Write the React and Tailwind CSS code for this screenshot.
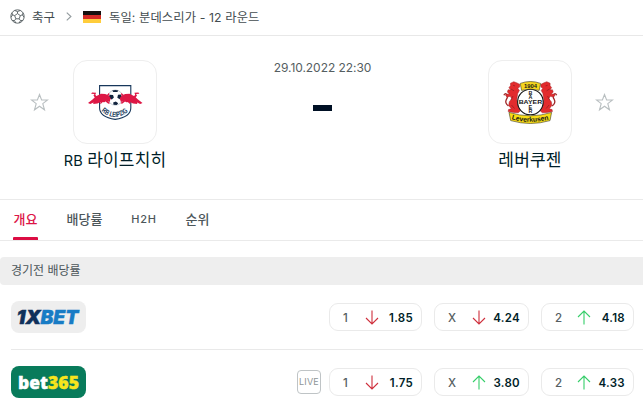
import React, { useState } from 'react';

const bookmakers = [
  {
    id: '1xbet',
    live: false,
    odds: [
      { label: '1', value: '1.85', up: false },
      { label: 'X', value: '4.24', up: false },
      { label: '2', value: '4.18', up: true },
    ],
  },
  {
    id: 'bet365',
    live: true,
    odds: [
      { label: '1', value: '1.75', up: false },
      { label: 'X', value: '3.80', up: true },
      { label: '2', value: '4.33', up: true },
    ],
  },
];

const tabs = [
  { name: '개요', style: 'w-[25px] mr-[28px] text-[13px]' },
  { name: '배당률', style: 'w-[37px] mr-[28px] text-[13px]' },
  { name: 'H2H', style: 'w-[26px] mr-[28px] text-[11px] tracking-[0.7px]' },
  { name: '순위', style: 'w-[25px] text-[13px]' },
];

function BallIcon() {
  return (
    <svg className="w-[15px] h-[15px]" viewBox="0 0 15 15" fill="none" stroke="#555e61" strokeWidth="0.9">
      <circle cx="7.5" cy="7.5" r="6.7" />
      <path d="M7.5 4.6 10.3 6.6 9.2 9.8H5.8L4.7 6.6Z" />
      <path d="M7.5 4.6V2.6M10.3 6.6l2-.7M9.2 9.8l1.3 1.8M5.8 9.8l-1.3 1.8M4.7 6.6l-2-.7" />
      <path d="M4.8 1.5 7.5 2.6 10.2 1.5M13.1 3.9 12.3 5.9 14 8.2M12.8 11.4 10.5 11.6 9.2 14M5.8 14 4.5 11.6 2.2 11.4M1 8.2 2.7 5.9 1.9 3.9" />
    </svg>
  );
}

function StarIcon() {
  return (
    <svg className="w-[19px] h-[19px]" viewBox="0 0 19 19" fill="none" stroke="#b9bfc1" strokeWidth="1.1">
      <path d="M9.5 1.5 11.6 7H17.5L12.8 10.6 14.5 16.8 9.5 13.2 4.5 16.8 6.2 10.6 1.5 7H7.4Z" />
    </svg>
  );
}

function ArrowIcon({ up }) {
  return (
    <svg
      className={up ? 'w-[14px] h-[15px]' : 'w-[14px] h-[15px] rotate-180'}
      viewBox="0 0 14 15"
      fill="none"
      stroke={up ? '#36ce6a' : '#cf2f3c'}
      strokeWidth="1.1"
    >
      <path d="M7 14.5V1M1 7 7 1l6 6" />
    </svg>
  );
}

function Bull() {
  return (
    <g fill="#dd1745">
      <path d="M15 43l4.5-3.5 3.5-3.2 5-2.6 4.2.2 3.2 1.3 2.4 3-1.2 3.8-3.2-1.3-2 1.6-3.6-.2-3.4 1.5-4.2.5.3-1.7-3.2 1.6Z" />
      <path d="M22 37.8l-1.5-2.3 1-1.6-3.4-.2 1-1.2 4 .2-.8 2.1 1.8 2.1ZM34 35l2-2.2.5 2.8Z" />
      <path d="M29 40l-2.2 3.4 1.2.4 3-3.2ZM33.5 40l3.6 3.2-1.7.6-3-2.4Z" />
    </g>
  );
}

function LeipzigLogo() {
  return (
    <svg className="w-[84px] h-[84px]" viewBox="0 0 84 84">
      <path d="M26.6 44V25.6H57.8V48C57.8 54.5 51 58 42.2 59.4 33.4 58 26.6 54.5 26.6 48Z" fill="#fff" stroke="#17375b" strokeWidth="1.1" />
      <circle cx="42.3" cy="37.6" r="7.6" fill="#fff" stroke="#9eabb7" strokeWidth="0.6" />
      <g fill="#10233d">
        <path d="M39.3 30.6q3-1.3 6 0l-.9 1.4h-4.2Z" />
        <path d="M36.6 34.7l3.4.2.9 2.5-2 2.2-3.2-1.4Z" />
        <path d="M45 34.7l2.9-.2 1.3 3.2-2 1.9-2.9-1.8Z" />
        <path d="M40.2 42.6l2.6-1.1 2.4 1.7-1.5 1.9-3.2-.3Z" />
      </g>
      <Bull />
      <g transform="translate(84.5 0) scale(-1 1)">
        <Bull />
      </g>
      <path id="leipzigArc" d="M28.2 50.8Q42.2 63.6 56.8 50.2" fill="none" />
      <text className="font-['Liberation_Sans_Narrow','Liberation_Sans'] font-bold" fontSize="7.4" fill="#17375b">
        <textPath href="#leipzigArc" textLength="30" lengthAdjust="spacingAndGlyphs">RB LEIPZIG</textPath>
      </text>
    </svg>
  );
}

function Lion() {
  return (
    <g>
      <path d="M20.5 46q-4-3-2.2-6.4 2-2.8.4-5.2-1.6-1.6-2.8.8" fill="none" stroke="#9f2b2b" strokeWidth="1.3" />
      <path
        d="M22.5 23.2l3.3-1.5 3.3 1.3 2.8 1.5-.3 2.6-1.8 1.2 1.6 2.2-1.7 3-.9 6 1.4 5.4 2.6 5.6-2.6 2.3-4.6-.4-5.4-.8.3-2 2.8-.8-2.6-3.4.6-3.6 2.4-3-1.3-2.5-3.4.8-1.5-2 1.6-1 2.4.1-2.1-2.2.7-2.2 2.4.1-1.5-2.3 1.5-1.9Z"
        fill="#e22b2d"
        stroke="#a32326"
        strokeWidth="0.5"
      />
      <path d="M25 25.3l2 .6M23 29l3 1.8M25 36l-2 4M23.5 45l3 3.5" stroke="#811b1f" strokeWidth="0.6" fill="none" />
    </g>
  );
}

function LeverkusenLogo() {
  return (
    <svg className="w-[84px] h-[84px]" viewBox="0 0 84 84">
      <Lion />
      <g transform="translate(84.6 0) scale(-1 1)">
        <Lion />
      </g>
      <circle cx="42.4" cy="42" r="12.8" fill="#fff" stroke="#171717" strokeWidth="1.1" />
      <path d="M32.2 23.4Q42.4 19.6 52.6 23.4L51.2 30.4Q42.4 27.6 33.6 30.4Z" fill="#f5d51d" stroke="#3e391f" strokeWidth="0.6" />
      <g className="font-['Liberation_Sans'] font-bold" fill="#171717" textAnchor="middle">
        <text x="42.4" y="28" fontSize="6" textLength="13" lengthAdjust="spacingAndGlyphs">1904</text>
        <text x="42.4" y="44.1" fontSize="6" textLength="23.5" lengthAdjust="spacingAndGlyphs">BAYER</text>
        <text x="42.4" y="34.8" fontSize="5.4">B</text>
        <text x="42.4" y="39.3" fontSize="5.4">A</text>
        <text x="42.4" y="48.7" fontSize="5.4">E</text>
        <text x="42.4" y="53.2" fontSize="5.4">R</text>
      </g>
      <path d="M21 52.4Q42.4 59.2 63.6 52.4L62 60.6Q42.4 66.4 22.7 60.6Z" fill="#f8dc16" stroke="#3e391f" strokeWidth="0.6" />
      <path id="leverkusenArc" d="M23.6 59.2Q42.4 64.4 61.6 59.2" fill="none" />
      <text className="font-['Liberation_Sans'] font-bold" fontSize="6.8" fill="#171717">
        <textPath href="#leverkusenArc" textLength="37.5" lengthAdjust="spacingAndGlyphs">Leverkusen</textPath>
      </text>
    </svg>
  );
}

function BookmakerLogo({ id }) {
  if (id === '1xbet') {
    return (
      <div className="w-[75px] h-8 rounded-lg bg-[#eeeeee]">
        <svg className="w-[75px] h-8" viewBox="0 0 75 32">
          <g className="font-['Inter'] font-black italic" fontSize="18.5" strokeWidth="0.4">
            <text x="5.5" y="22.8" fill="#10315b" stroke="#10315b" textLength="24.5" lengthAdjust="spacingAndGlyphs">1X</text>
            <text x="29.5" y="22.8" fill="#187cc5" stroke="#187cc5" textLength="38" lengthAdjust="spacingAndGlyphs">BET</text>
          </g>
        </svg>
      </div>
    );
  }

  return (
    <div className="w-[75px] h-8 rounded-lg bg-[#087b5b]">
      <svg className="w-[75px] h-8" viewBox="0 0 75 32">
        <g className="font-['Open_Sans'] font-extrabold" fontSize="17.5" strokeWidth="0.4">
          <text x="7" y="22.5" fill="#fff" stroke="#fff" textLength="30" lengthAdjust="spacingAndGlyphs">bet</text>
          <text x="37" y="22.5" fill="#f9e51c" stroke="#f9e51c" textLength="31" lengthAdjust="spacingAndGlyphs">365</text>
        </g>
      </svg>
    </div>
  );
}

function Team({ prefix, name, children }) {
  return (
    <div className="flex w-[110px] flex-col items-center">
      <div className="box-border h-[84px] w-[84px] overflow-hidden rounded-[14px] border border-[#eeeeee]">
        <div className="-m-px">{children}</div>
      </div>
      <div className="mt-[5px] whitespace-nowrap text-[17px] leading-[23px] tracking-[0.2px] text-[#001e28]">
        {prefix && <span className="text-[14.5px]">{prefix} </span>}
        {name}
      </div>
    </div>
  );
}

function OddsBox({ label, value, up }) {
  return (
    <div className="flex h-7 items-center justify-between rounded-[9px] border border-[#eaeaea] pl-[13px] pr-[8px]">
      <span className="w-2 pt-px text-[11.5px] leading-4 font-medium text-[#555e61]">{label}</span>
      <span className="flex items-center gap-[7px]">
        <ArrowIcon up={up} />
        <span className="flex w-[27px] justify-end whitespace-nowrap pt-px text-[11.5px] leading-4 font-semibold tracking-[0.3px] text-[#001e28]">{value}</span>
      </span>
    </div>
  );
}

function App() {
  const [activeTab, setActiveTab] = useState('개요');

  return (
    <div className="h-[413px] w-[643px] overflow-hidden bg-white font-['Inter','Noto_Sans_CJK_KR',sans-serif]">
      <nav className="flex h-9 items-center border-b border-[#e8e8e8] pb-[2px] pl-[10px] text-[12.3px] text-[#434c50]">
        <BallIcon />
        <span className="ml-[7px] w-[24px] whitespace-nowrap pt-[3px] text-[12.5px]">축구</span>
        <svg className="ml-[10px] h-[9px] w-[6px]" viewBox="0 0 5 8" fill="none" stroke="#939b9e">
          <path d="M.5.5 4.2 4 .5 7.5" />
        </svg>
        <div className="ml-[11px] flex h-3 w-[18px] flex-col">
          <span className="h-1 bg-[#16100f]" />
          <span className="h-1 bg-[#d52a26]" />
          <span className="h-1 bg-[#ffcd3b]" />
        </div>
        <span className="ml-[8px] whitespace-nowrap pt-[3px] tracking-[0.1px]">독일: 분데스리가 - 12 라운드</span>
      </nav>

      <section className="flex h-[164px] justify-between border-b border-[#eaeaea] pr-[29px] pl-[30px] pt-[24px]">
        <div className="flex">
          <div className="mt-[33px] w-[30px]">
            <StarIcon />
          </div>
          <Team prefix="RB" name="라이프치히">
            <LeipzigLogo />
          </Team>
        </div>
        <div className="flex flex-col items-center">
          <div className="whitespace-nowrap text-[12px] leading-4 tracking-[-0.05px] text-[#555e61]">29.10.2022 22:30</div>
          <div className="mt-[29px] h-[6px] w-[19px] bg-[#001024]" />
        </div>
        <div className="flex">
          <Team name="레버쿠젠">
            <LeverkusenLogo />
          </Team>
          <div className="mt-[33px] flex w-[29px] justify-end">
            <StarIcon />
          </div>
        </div>
      </section>

      <div className="flex h-[41px] border-b border-[#eaeaea] pl-[13px]">
        {tabs.map((tab) => (
          <button
            key={tab.name}
            onClick={() => setActiveTab(tab.name)}
            className={`flex flex-col items-center justify-between whitespace-nowrap font-medium ${tab.style} ${
              activeTab === tab.name ? 'text-[#dc1547]' : 'text-[#4c565a]'
            }`}
          >
            <span className="h-[37px] leading-[39px]">{tab.name}</span>
            {activeTab === tab.name && <span className="h-[3px] w-full rounded-t-[1px] bg-[#dc0d43]" />}
          </button>
        ))}
      </div>

      <div className="mt-4 h-7 rounded-l-[4px] bg-[#eeeeee] pl-[11px] text-[12px] leading-[27px] text-[#4c565a]">경기전 배당률</div>

      <div className="pl-[11px]">
        {bookmakers.map((bookmaker) => (
          <div key={bookmaker.id} className="flex h-[65px] items-center justify-between border-b border-[#e9e9e9] pr-[9px]">
            <BookmakerLogo id={bookmaker.id} />
            <div className="flex items-center gap-2">
              {bookmaker.live && (
                <span className="flex h-6 w-6 items-center justify-center rounded-[4px] border border-[#bfc4c6] text-[9px] tracking-[0.2px] text-[#8d9598]">
                  LIVE
                </span>
              )}
              <div className="grid grid-cols-[93px_95px_93px] gap-3">
                {bookmaker.odds.map((odd) => (
                  <OddsBox key={odd.label} {...odd} />
                ))}
              </div>
            </div>
          </div>
        ))}
      </div>
    </div>
  );
}

export default App;
